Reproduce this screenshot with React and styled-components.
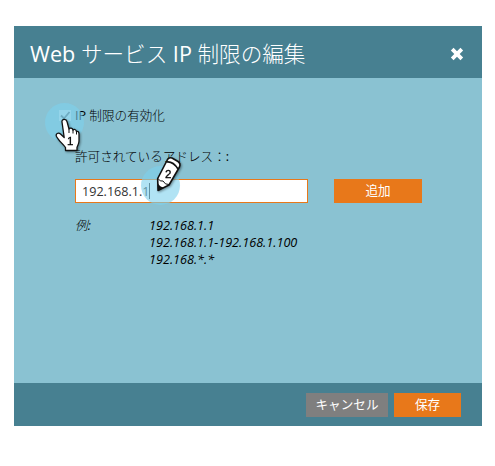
import React from "react";
import styled, { createGlobalStyle } from "styled-components";

const GlobalStyle = createGlobalStyle`
  *, *::before, *::after { box-sizing: border-box; }
  body {
    margin: 0;
    background: #fff;
    color: #000;
    font: 13px/17px "Open Sans", "Noto Sans CJK JP Light", "Noto Sans CJK JP", sans-serif;
  }
`;

const Dialog = styled.section`
  position: relative;
  display: flex;
  flex-direction: column;
  width: 468px;
  height: 400px;
  margin: 26px 0 0 14px;
  background: #8ac2d2;
`;

const Header = styled.header`
  display: flex;
  align-items: center;
  justify-content: space-between;
  height: 52px;
  padding: 3px 18px 0 16px;
  background: #478091;
  color: #fff;
`;

const Title = styled.h1`
  margin: 0;
  font-size: 21.6px;
  font-weight: 400;
  line-height: 32px;
  white-space: nowrap;
`;

const CloseButton = styled.button`
  display: flex;
  padding: 1px 0 0;
  border: 0;
  background: none;
  color: #fff;
`;

const Content = styled.div`
  flex: 1;
  padding: 28px 60px 0 61px;
`;

const CheckRow = styled.label`
  display: flex;
  align-items: center;
  height: 18px;
  margin-left: -16px;
  gap: 4px;
  font-size: 12.6px;
  white-space: nowrap;
`;

const CheckBox = styled.span`
  display: flex;
  width: 12px;
  height: 11px;
  background: #b9dbe7;
`;

const FieldLabel = styled.div`
  height: 18px;
  margin-top: 24px;
  font-size: 12.6px;
  line-height: 18px;
`;

const FieldRow = styled.div`
  display: flex;
  justify-content: space-between;
  margin-top: 13px;
`;

const AddressInput = styled.div`
  display: flex;
  align-items: center;
  width: 233px;
  height: 24px;
  padding: 0 6px;
  border: 1px solid #e8781a;
  background: #fff;
  color: #333;
  font-size: 12.6px;
`;

const Caret = styled.i`
  width: 1px;
  height: 16px;
  margin-left: -1px;
  background: #333;
`;

const Button = styled.button`
  width: ${(p) => p.$width}px;
  height: 24px;
  padding: 0 0 2px;
  border: 0;
  background: ${(p) => (p.$muted ? "#7f7f7f" : "#e8781a")};
  color: #fff;
  font: 12.6px/17px "Open Sans", "Noto Sans CJK JP", sans-serif;
`;

const Examples = styled.dl`
  display: grid;
  grid-template-columns: 74px 1fr;
  margin: 14px 0 0;
  font-size: 12.65px;
  font-style: italic;
  line-height: 17px;
  dd { margin: 0; }
`;

const Footer = styled.footer`
  display: flex;
  justify-content: flex-end;
  gap: 6px;
  height: 43px;
  padding: 10px 21px 0 0;
  background: #478091;
`;

const Pointer = styled.svg`
  position: absolute;
  left: ${(p) => p.$x}px;
  top: ${(p) => p.$y}px;
  pointer-events: none;
  filter: drop-shadow(1px 1px 1px rgba(0, 0, 0, 0.4));
  text {
    font: 11.5px "Liberation Sans", Arial, sans-serif;
    fill: #000;
    stroke: #000;
    stroke-width: 0.3;
  }
`;

const Halo = styled.span`
  position: absolute;
  left: ${(p) => p.$x}px;
  top: ${(p) => p.$y}px;
  width: 39px;
  height: 39px;
  border-radius: 50%;
  background: rgba(125, 208, 236, 0.6);
  pointer-events: none;
`;

const HandStep = () => (
  <>
    <Halo $x={31} $y={77} />
    <Pointer $x={27} $y={74} width="50" height="56">
      <path
        d="M21 22C20.500 18.800 25.300 18.500 26 21.500L28 29C29 27.500 31.500 28 32 30C33 28.700 35 29.500 35.500 31.500C37 30.800 38 32 38 34V41C38 44 36.500 45.500 36 47.500V50.500H24.500V47.500C22.500 44.500 17.500 40.500 15.500 36.500C14.300 33.700 17.300 32 19.500 34L23.200 37.500Z"
        fill="#fff"
        stroke="#111"
        strokeWidth="1.3"
        strokeLinejoin="round"
      />
      <path d="M28 29v4M32 30v3.500M35.500 31.500v3" fill="none" stroke="#111" />
      <text x="26" y="44.500">1</text>
    </Pointer>
  </>
);

const PencilStep = () => (
  <>
    <Halo $x={126.5} $y={140} />
    <Pointer $x={124} $y={124} width="50" height="56">
      <path
        d="M20 40.500L19.700 28.500L29 10.500Q30.500 7 34 8L40 11.500Q43 13.500 41.500 17L31 35Z"
        fill="#fff"
        stroke="#111"
        strokeWidth="1.6"
        strokeLinejoin="round"
      />
      <path d="M20 41V33.500Q22 37 25.500 37.500Z" fill="#111" />
      <path d="M20 28.500Q22 32 25 31Q27 35 31 34.500" fill="none" stroke="#111" />
      <path d="M28.500 12Q35 11 40 19" fill="none" stroke="#111" strokeWidth="1.6" />
      <text x="27" y="27.500">2</text>
    </Pointer>
  </>
);

export default function App() {
  return (
    <>
      <GlobalStyle />
      <Dialog>
        <Header>
          <Title>Web サービス IP 制限の編集</Title>
          <CloseButton aria-label="閉じる">
            <svg width="14" height="14" viewBox="0 0 14 14">
              <path d="M2.200 2.200l9.600 9.600M11.800 2.200l-9.600 9.600" stroke="currentColor" strokeWidth="3.800" />
            </svg>
          </CloseButton>
        </Header>
        <Content>
          <CheckRow>
            <CheckBox>
              <svg width="12" height="11"><path d="M2 5.500l3 3 5.500-6.500" fill="none" stroke="#587580" strokeWidth="1.800" /></svg>
            </CheckBox>
            IP 制限の有効化
          </CheckRow>
          <FieldLabel>許可されているアドレス：:</FieldLabel>
          <FieldRow>
            <AddressInput>192.168.1.1<Caret /></AddressInput>
            <Button $width={88}>追加</Button>
          </FieldRow>
          <Examples>
            <dt>例:</dt>
            <dd>192.168.1.1<br />192.168.1.1-192.168.1.100<br />192.168.*.*</dd>
          </Examples>
        </Content>
        <Footer>
          <Button $width={82} $muted>キャンセル</Button>
          <Button $width={67}>保存</Button>
        </Footer>
        <HandStep />
        <PencilStep />
      </Dialog>
    </>
  );
}
